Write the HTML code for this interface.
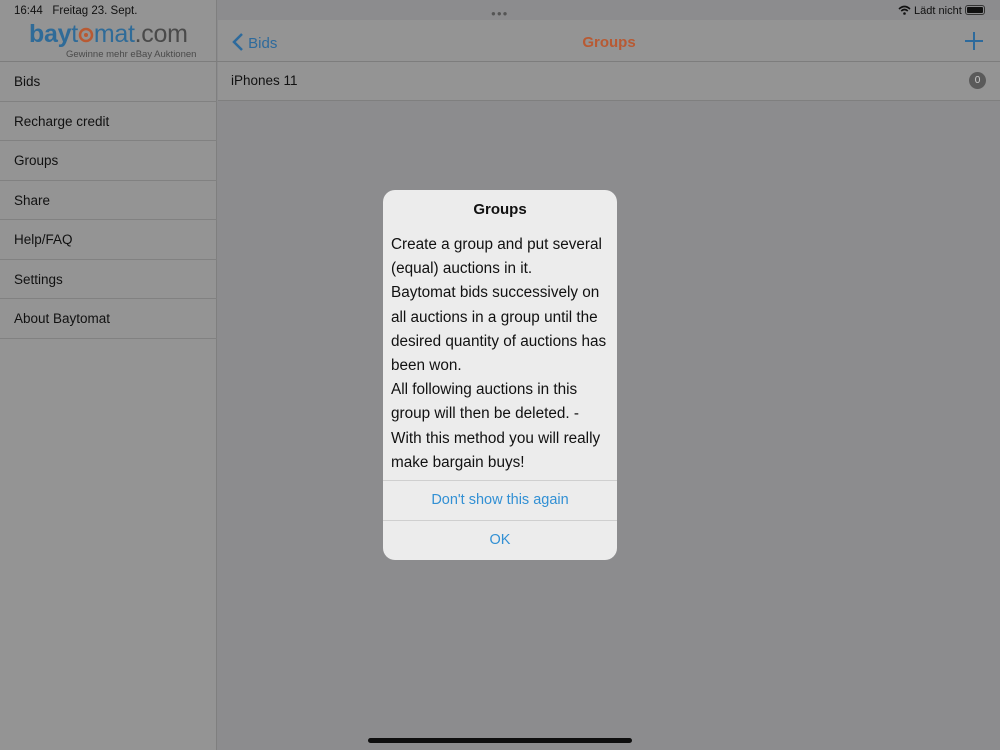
<!DOCTYPE html>
<html><head><meta charset="utf-8"><style>
*{margin:0;padding:0;box-sizing:border-box}
body{width:1000px;height:750px;overflow:hidden;background:#8c8c8e;font-family:"Liberation Sans","DejaVu Sans",sans-serif;position:relative;color:#111}
.side{position:absolute;left:0;top:0;width:217px;height:750px;background:#949494;border-right:1px solid #7f7f7f}
.sb{position:absolute;top:5px;font-size:11px;color:#111}
.logo{position:absolute;left:29px;top:20px;font-size:25px;letter-spacing:-0.3px}
.logo .b{color:#2f6b98;font-weight:bold}
.logo .t{color:#2f6b98}
.logo .c{color:#4a4a4a}
.tag{position:absolute;left:66px;top:49px;font-size:9.5px;color:#4a4a4a}
.hdr{position:absolute;left:0;top:61px;width:1000px;height:1px;background:#7d7d7d}
.menu{position:absolute;left:0;top:62px;width:217px}
.menu div{height:39.5px;line-height:39px;padding-left:14px;font-size:13.5px;color:#111;position:relative}
.menu div:after{content:"";position:absolute;left:0;right:0;bottom:0;height:1px;background:#818181}
.row{position:absolute;left:218px;top:62px;width:782px;height:39px;background:#949494;border-bottom:1px solid #7f7f7f}
.row span{position:absolute;left:13px;top:11px;font-size:13.5px}
.badge{position:absolute;right:14px;top:10px;width:17px;height:17px;border-radius:50%;background:#5a5a5a;color:#ccc;font-size:10px;text-align:center;line-height:17px}
.nav{position:absolute;left:218px;top:20px;width:782px;height:41px;background:#949494}
.back{position:absolute;left:14px;top:13px;color:#2d6a9c;font-size:15px}
.title{position:absolute;left:0;right:0;text-align:center;top:14px;color:#b85a33;font-size:15px;font-weight:bold}
.alert{position:absolute;left:383px;top:190px;width:234px;height:370px;background:#ececec;border-radius:12px;overflow:hidden}
.alert h3{text-align:center;font-size:15px;margin-top:11px;font-weight:bold}
.alert p{font-size:15.3px;line-height:24.2px;padding:0 8px;margin-top:15px;color:#111}
.btn{position:absolute;left:0;width:234px;height:40px;border-top:1px solid #cfcfcf;text-align:center;line-height:39px;color:#3290d4;font-size:14.5px}
.home{position:absolute;left:368px;top:738px;width:264px;height:5px;border-radius:3px;background:#0e0e0e}
</style></head><body>
<div class="nav">
 <div class="back"><svg width="12" height="18" viewBox="0 0 12 18" style="vertical-align:-3px"><path d="M10 1 L2 9 L10 17" fill="none" stroke="#2d6a9c" stroke-width="2.5"/></svg> Bids</div>
 <div class="title">Groups</div>
 <svg style="position:absolute;right:16px;top:11px" width="20" height="20"><path d="M10 1V19M1 10H19" stroke="#2d6a9c" stroke-width="2"/></svg>
</div>
<div class="side">
 <div class="logo"><span class="b">bay</span><span class="t">t<svg width="16" height="16" viewBox="0 0 16 16" style="vertical-align:-1px"><circle cx="8" cy="8" r="6" fill="none" stroke="#b85a33" stroke-width="2.5"/><circle cx="8" cy="8" r="2" fill="#b85a33"/></svg>mat</span><span class="c">.com</span></div>
 <div class="tag">Gewinne mehr eBay Auktionen</div>
 <div class="menu">
  <div>Bids</div><div>Recharge credit</div><div>Groups</div><div>Share</div><div>Help/FAQ</div><div>Settings</div><div>About Baytomat</div>
 </div>
</div>
<div class="sb" style="left:14px;font-size:11.5px">16:44&nbsp;&nbsp;&nbsp;Freitag 23. Sept.</div>
<div style="position:absolute;left:491px;top:9px;font-size:8px;color:#555;letter-spacing:1px">●●●</div>
<div class="sb" style="left:898px"><svg width="13" height="10" viewBox="0 0 13 10" style="vertical-align:-1px"><path d="M1 4 Q6.5 -1 12 4" fill="none" stroke="#111" stroke-width="1.6"/><path d="M3.2 6 Q6.5 3 9.8 6" fill="none" stroke="#111" stroke-width="1.6"/><circle cx="6.5" cy="8.5" r="1.3" fill="#111"/></svg> Lädt nicht <span style="display:inline-block;width:20px;height:10px;border:1px solid #333;border-radius:3px;vertical-align:-1px;padding:1px"><span style="display:block;width:100%;height:100%;background:#111;border-radius:1px"></span></span></div>
<div class="hdr"></div>
<div class="row"><span>iPhones 11</span><div class="badge">0</div></div>
<div class="alert">
 <h3>Groups</h3>
 <p>Create a group and put several (equal) auctions in it.<br>Baytomat bids successively on all auctions in a group until the desired quantity of auctions has been won.<br>All following auctions in this group will then be deleted. - With this method you will really make bargain buys!</p>
 <div class="btn" style="top:290px">Don't show this again</div>
 <div class="btn" style="top:330px">OK</div>
</div>
<div class="home"></div>
</body></html>
